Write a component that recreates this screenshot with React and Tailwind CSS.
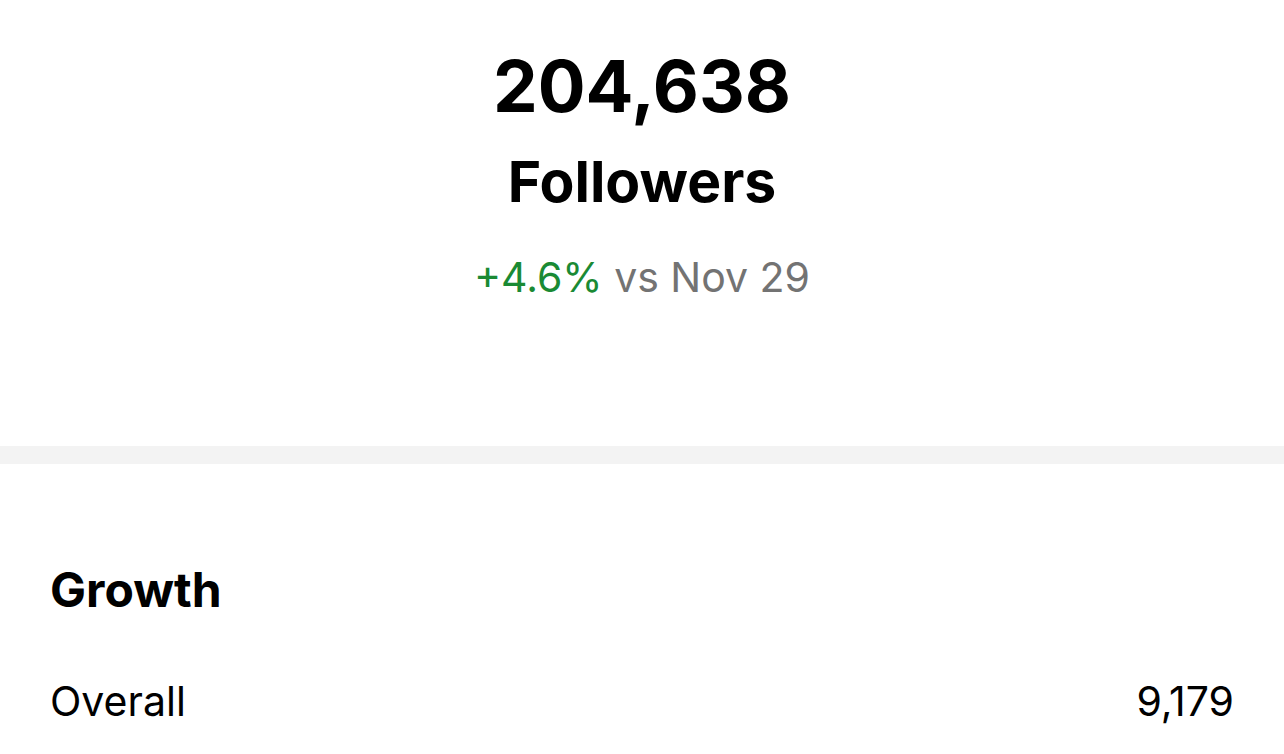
import React from 'react';

export default function App() {
  return (
    <div className="min-h-screen bg-white text-black font-['Inter',sans-serif]">
      <div className="h-[446px] flex flex-col items-center pt-[51px]">
        <h1 className="text-[71px] leading-[71px] font-bold">204,638</h1>
        <h2 className="mt-[31px] text-[57px] leading-[57px] font-bold">Followers</h2>
        <p className="mt-[47px] text-[41px] leading-[41px]">
          <span className="text-[#1a8a34]">+4.6%</span>{' '}
          <span className="text-[#737373]">vs Nov 29</span>
        </p>
      </div>
      <div className="h-[18px] bg-[#f3f3f3]" />
      <div className="px-[50px] pt-[102px]">
        <h3 className="text-[48px] leading-[48px] font-bold">Growth</h3>
        <div className="mt-[67px] flex justify-between text-[41px] leading-[41px]">
          <span>Overall</span>
          <span>9,179</span>
        </div>
      </div>
    </div>
  );
}
